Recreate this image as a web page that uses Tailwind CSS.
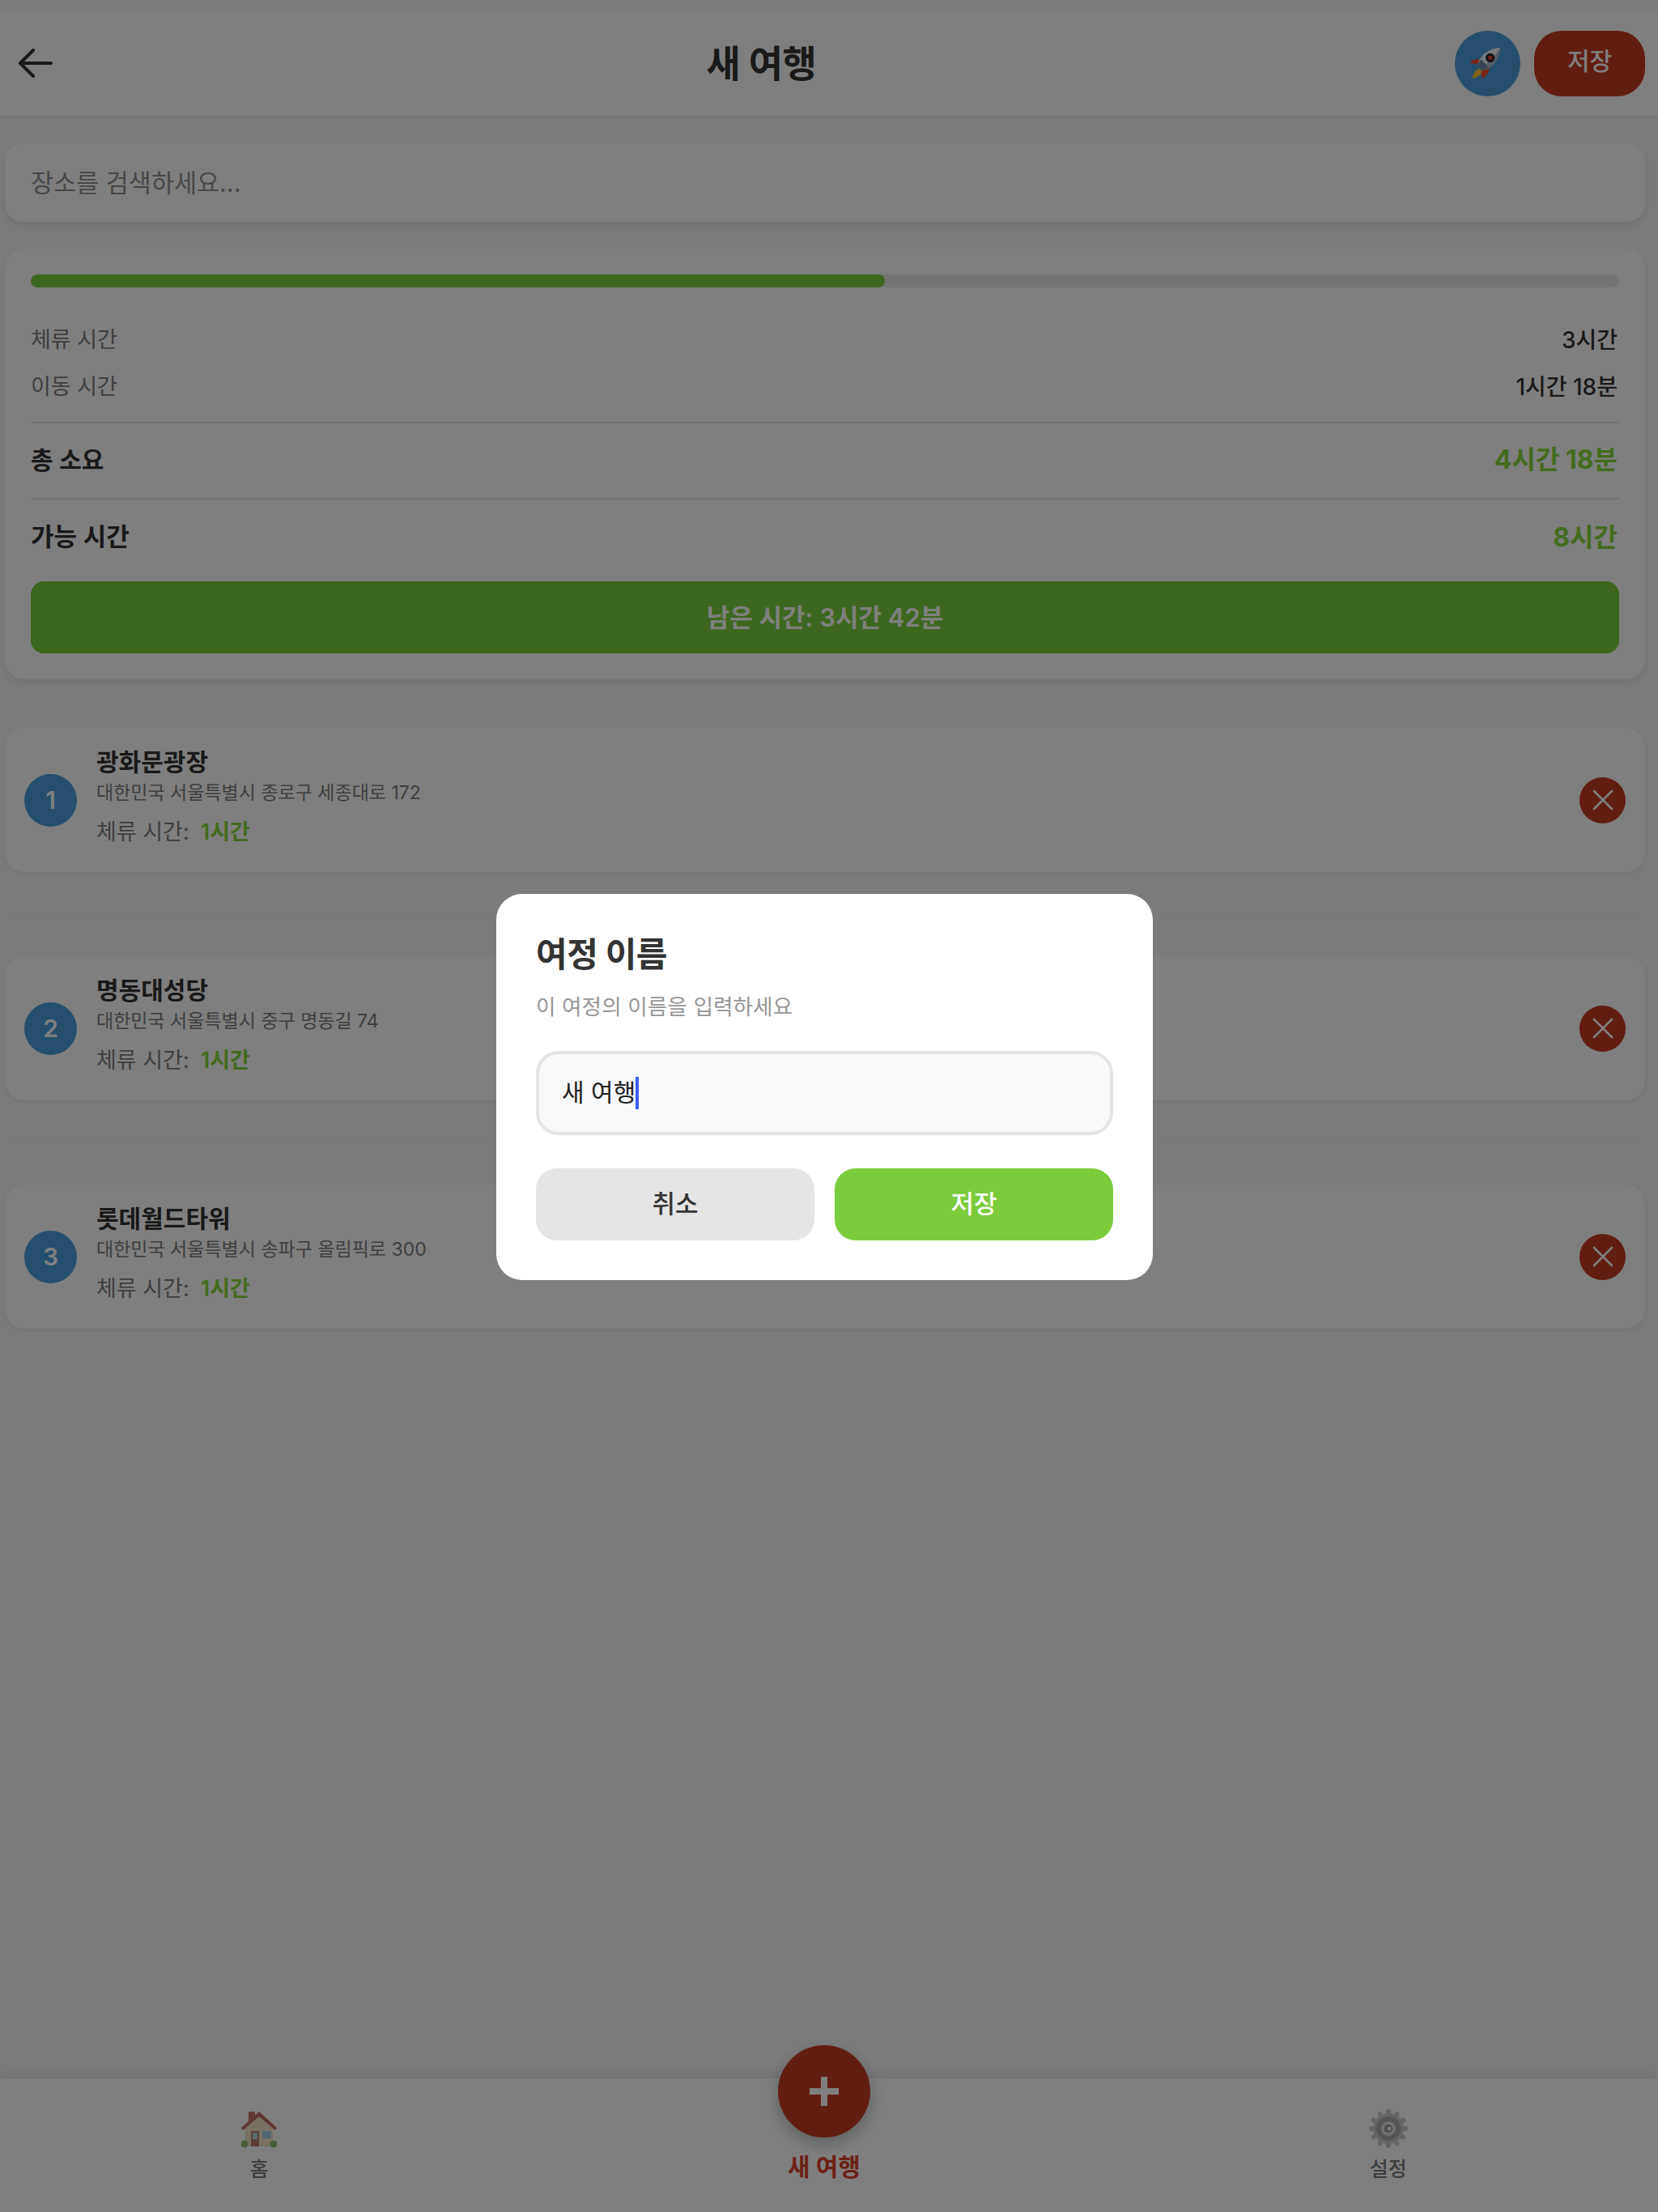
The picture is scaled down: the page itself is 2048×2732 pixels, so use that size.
<!DOCTYPE html>
<html lang="ko">
<head>
<meta charset="utf-8">
<script src="https://cdn.jsdelivr.net/npm/@tailwindcss/browser@4"></script>
</head>
<body class="m-0 bg-[#f7f7f7]">
<div class="relative w-[2048px] h-[2732px] overflow-hidden flex flex-col bg-[#f7f7f7] font-['Inter','Noto_Sans_CJK_KR',sans-serif] text-[#333]">

  <header class="h-[144px] shrink-0 bg-white border-t-[13px] border-t-[#f9f9f9] border-b border-b-[#e8e8e8] shadow-[0_2px_6px_rgba(0,0,0,0.06)] flex items-center pl-[22px] pr-[16px]">
    <svg class="w-[44px] h-[36px] shrink-0" viewBox="0 0 44 36" fill="none" stroke="#333" stroke-width="4" stroke-linecap="round" stroke-linejoin="round"><path d="M41 18H4M19 2 3 18l16 16"/></svg>
    <h1 class="flex-1 text-center text-[46px] font-bold leading-none tracking-[-0.5px] pl-[18px] m-0">새 여행</h1>
    <div class="w-[81px] h-[81px] rounded-full bg-[#4a9fd8] flex items-center justify-center shrink-0 mr-[17px]">
      <svg class="w-[40px] h-[40px] mr-[8px]" viewBox="0 0 36 36">
        <path d="M11 13 3 15c-1 1-1 3 0 3l6 1 4-3z" fill="#f04a28"/>
        <path d="M12 24c-4 1-7 5-8 11 6-1 10-4 11-8z" fill="#ffc73a"/>
        <path d="M21 23l-6 3c-1 3-1 6 0 9 4-2 8-6 8-11z" fill="#f04a28"/>
        <path d="M35 1c-6 0-14 3-19 8-3 3-5 7-6 11l6 6c4-1 8-3 11-6 5-5 8-13 8-19z" fill="#f0f3f6"/>
        <path d="M35 1c0 6-3 14-8 19-3 3-7 5-11 6l-3-3c8-3 17-13 22-22z" fill="#a9b6c4"/>
        <path d="M14 14c-2 2-3 4-4 6l6 6c2-1 4-2 6-4z" fill="#6d89a8"/>
        <circle cx="24" cy="12" r="5" fill="#161c26"/><circle cx="24" cy="12" r="2.6" fill="#d8352a"/>
      </svg>
    </div>
    <div class="w-[137px] h-[81px] rounded-[34px] bg-[#c53a25] text-white text-[30px] font-medium flex items-center justify-center pb-[6px] shrink-0">저장</div>
  </header>

  <main class="flex-1 w-[2038px] pt-[33px] px-[6px] flex flex-col">
    <div class="h-[97px] rounded-[22px] bg-white shadow-[0_4px_10px_rgba(0,0,0,0.1)] flex items-center pl-[32px] text-[30.5px] text-[#8f8f8f]">장소를 검색하세요...</div>

    <section class="mt-[33px] h-[532px] rounded-[24px] bg-white shadow-[0_4px_10px_rgba(0,0,0,0.08)] px-[32px] pt-[32px] flex flex-col">
      <div class="h-[16px] rounded-full bg-[#e8e8e8] overflow-hidden"><div class="h-full w-[1055px] rounded-full bg-[#7acc3c]"></div></div>
      <div class="mt-[36px] pr-[2px] h-[58px] flex items-center justify-between"><span class="text-[27px] text-[#7d7d7d]">체류 시간</span><span class="text-[28px] font-medium">3시간</span></div>
      <div class="h-[58px] pr-[2px] flex items-center justify-between"><span class="text-[27px] text-[#7d7d7d]">이동 시간</span><span class="text-[28px] font-medium">1시간 18분</span></div>
      <div class="mt-[14px] h-[96px] pr-[2px] pb-[2px] border-y-[2px] border-[#e5e5e5] flex items-center justify-between font-semibold"><span class="text-[30px]">총 소요</span><span class="text-[32px] text-[#86d63f] font-bold">4시간 18분</span></div>
      <div class="h-[93px] pr-[2px] flex items-center justify-between font-semibold"><span class="text-[31px]">가능 시간</span><span class="text-[32px] text-[#86d63f] font-bold">8시간</span></div>
      <div class="mt-[8px] h-[89px] pt-[2px] rounded-[16px] bg-[#7acc3c] text-white text-[31px] font-semibold flex items-center justify-center">남은 시간: 3시간 42분</div>
    </section>

    <div class="mt-[60px] flex flex-col">
      <article class="h-[178px] rounded-[24px] bg-white shadow-[0_2px_6px_rgba(0,0,0,0.08)] flex items-center px-[24px]">
        <div class="w-[65px] h-[65px] rounded-full bg-[#4a9fd8] text-white text-[30px] font-semibold flex items-center justify-center shrink-0">1</div>
        <div class="ml-[24px] pb-[7px] flex-1 flex flex-col">
          <div class="text-[30px] font-semibold leading-[36px]">광화문광장</div>
          <div class="mt-[3px] text-[23px] text-[#7d7d7d] leading-[34px]">대한민국 서울특별시 종로구 세종대로 172</div>
          <div class="mt-[14px] text-[27px] leading-[36px] text-[#7d7d7d] flex gap-[14px]"><span>체류 시간:</span><span class="text-[#86d63f] font-semibold">1시간</span></div>
        </div>
        <div class="w-[57px] h-[57px] rounded-full bg-[#c53a25] flex items-center justify-center shrink-0"><svg class="w-[26px] h-[26px]" viewBox="0 0 26 26" fill="none" stroke="#fff" stroke-width="2.6" stroke-linecap="round"><path d="M2 2l22 22M24 2 2 24"/></svg></div>
      </article>
      <div class="h-px mt-[52px] mb-[51px] bg-[#efefef]"></div>
      <article class="h-[178px] rounded-[24px] bg-white shadow-[0_2px_6px_rgba(0,0,0,0.08)] flex items-center px-[24px]">
        <div class="w-[65px] h-[65px] rounded-full bg-[#4a9fd8] text-white text-[30px] font-semibold flex items-center justify-center shrink-0">2</div>
        <div class="ml-[24px] pb-[7px] flex-1 flex flex-col">
          <div class="text-[30px] font-semibold leading-[36px]">명동대성당</div>
          <div class="mt-[3px] text-[23px] text-[#7d7d7d] leading-[34px]">대한민국 서울특별시 중구 명동길 74</div>
          <div class="mt-[14px] text-[27px] leading-[36px] text-[#7d7d7d] flex gap-[14px]"><span>체류 시간:</span><span class="text-[#86d63f] font-semibold">1시간</span></div>
        </div>
        <div class="w-[57px] h-[57px] rounded-full bg-[#c53a25] flex items-center justify-center shrink-0"><svg class="w-[26px] h-[26px]" viewBox="0 0 26 26" fill="none" stroke="#fff" stroke-width="2.6" stroke-linecap="round"><path d="M2 2l22 22M24 2 2 24"/></svg></div>
      </article>
      <div class="h-px mt-[52px] mb-[51px] bg-[#efefef]"></div>
      <article class="h-[178px] rounded-[24px] bg-white shadow-[0_2px_6px_rgba(0,0,0,0.08)] flex items-center px-[24px]">
        <div class="w-[65px] h-[65px] rounded-full bg-[#4a9fd8] text-white text-[30px] font-semibold flex items-center justify-center shrink-0">3</div>
        <div class="ml-[24px] pb-[7px] flex-1 flex flex-col">
          <div class="text-[30px] font-semibold leading-[36px]">롯데월드타워</div>
          <div class="mt-[3px] text-[23px] text-[#7d7d7d] leading-[34px]">대한민국 서울특별시 송파구 올림픽로 300</div>
          <div class="mt-[14px] text-[27px] leading-[36px] text-[#7d7d7d] flex gap-[14px]"><span>체류 시간:</span><span class="text-[#86d63f] font-semibold">1시간</span></div>
        </div>
        <div class="w-[57px] h-[57px] rounded-full bg-[#c53a25] flex items-center justify-center shrink-0"><svg class="w-[26px] h-[26px]" viewBox="0 0 26 26" fill="none" stroke="#fff" stroke-width="2.6" stroke-linecap="round"><path d="M2 2l22 22M24 2 2 24"/></svg></div>
      </article>
    </div>
  </main>

  <nav class="h-[166px] shrink-0 bg-white border-t border-[#e4e4e4] shadow-[0_-4px_12px_rgba(0,0,0,0.08)] w-full flex">
    <div class="w-[2036px] grid grid-cols-3 items-start">
      <div class="flex flex-col items-center pt-[38px] -ml-[38px]">
        <svg class="w-[46px] h-[48px]" viewBox="0 0 46 48">
          <rect x="10" y="3" width="8" height="14" rx="1" fill="#c9756c"/>
          <path d="M6 22 23 7l17 15v24H6z" fill="#f0e2c6"/>
          <path d="M1 23 23 3l22 20-2 3L23 9 3 26z" fill="#c06a62"/>
          <rect x="13" y="27" width="10" height="19" fill="#b37c66"/>
          <rect x="15" y="29" width="6" height="8" fill="#b5d3e6"/>
          <rect x="27" y="27" width="11" height="9" fill="#a3c9e2"/>
          <circle cx="5" cy="43" r="4.5" fill="#8fbc72"/><circle cx="41" cy="43" r="4.5" fill="#8fbc72"/>
        </svg>
        <span class="mt-[11px] text-[25px] leading-[30px] font-medium text-[#7a7a7a]">홈</span>
      </div>
      <div></div>
      <div class="flex flex-col items-center pt-[38px] pl-[36px]">
        <svg class="w-[48px] h-[48px]" viewBox="0 0 48 48">
          <g fill="#c8cacd"><circle cx="24" cy="24" r="19"/>
            <rect x="21" y="0" width="6" height="48" rx="3"/><rect x="21" y="0" width="6" height="48" rx="3" transform="rotate(30 24 24)"/><rect x="21" y="0" width="6" height="48" rx="3" transform="rotate(60 24 24)"/><rect x="21" y="0" width="6" height="48" rx="3" transform="rotate(90 24 24)"/><rect x="21" y="0" width="6" height="48" rx="3" transform="rotate(120 24 24)"/><rect x="21" y="0" width="6" height="48" rx="3" transform="rotate(150 24 24)"/></g>
          <circle cx="24" cy="24" r="15" fill="#a8abaf"/><circle cx="24" cy="24" r="9" fill="#dcdee0"/><circle cx="24" cy="24" r="5" fill="#8c8f93"/><circle cx="25" cy="24" r="2.6" fill="#f5f5f5"/>
        </svg>
        <span class="mt-[11px] text-[25px] leading-[30px] font-medium text-[#7a7a7a]">설정</span>
      </div>
    </div>
  </nav>

  <div class="absolute left-[961px] top-[2526px] flex flex-col items-center w-[114px]">
    <div class="w-[114px] h-[114px] rounded-full bg-[#c53a25] shadow-[0_8px_20px_rgba(0,0,0,0.25)] flex items-center justify-center">
      <svg class="w-[36px] h-[36px]" viewBox="0 0 36 36"><path d="M14 0h8v14h14v8H22v14h-8V22H0v-8h14z" fill="#fff"/></svg>
    </div>
    <span class="mt-[18px] text-[30px] leading-[36px] font-bold text-[#d9422c] whitespace-nowrap">새 여행</span>
  </div>

  <div class="absolute inset-0 bg-black/50 flex justify-start">
    <div class="w-[2037px] h-[2684px] flex items-center justify-center">
      <div class="w-[811px] h-[477px] rounded-[32px] bg-white px-[49px] pt-[50px] flex flex-col">
        <div class="text-[42px] font-bold leading-[46px] tracking-[-0.5px] mt-[2px]">여정 이름</div>
        <div class="mt-[24px] text-[26.7px] leading-[34px] text-[#969696]">이 여정의 이름을 입력하세요</div>
        <div class="mt-[38px] h-[104px] rounded-[28px] border-[4px] border-[#e5e5e5] bg-[#f8f9fa] flex items-center pl-[28px] text-[30px] text-[#222]"><span>새 여행</span><span class="inline-block w-[4px] h-[40px] bg-[#3a5ff0]"></span></div>
        <div class="mt-[41px] flex gap-[25px]">
          <div class="flex-1 h-[89px] rounded-[26px] bg-[#e5e5e5] text-[31px] font-medium flex items-center justify-center text-[#333]">취소</div>
          <div class="flex-1 h-[89px] rounded-[26px] bg-[#7acc3c] text-[31px] font-medium flex items-center justify-center text-white">저장</div>
        </div>
      </div>
    </div>
  </div>
</div>
</body>
</html>
